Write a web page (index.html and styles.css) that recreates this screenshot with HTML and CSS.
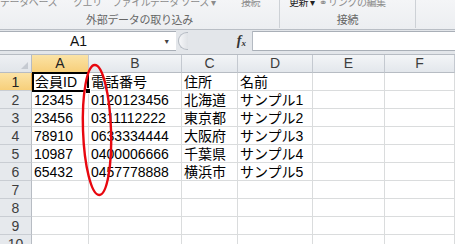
FILE: index.html
```html
<!DOCTYPE html>
<html lang="ja">
<head>
  <meta charset="UTF-8">
  <title>Excel - 外部データの取り込み</title>
  <link rel="stylesheet" href="styles.css">
</head>
<body>
  <div class="ribbon">
    <div class="group group-ext">
      <div class="cmds">
        <span class="cmd c1">データベース</span>
        <span class="cmd c2">クエリ</span>
        <span class="cmd c3">ファイル</span>
        <span class="cmd c4">データ ソース ▾</span>
        <span class="cmd c5">接続</span>
      </div>
      <div class="label">外部データの取り込み</div>
    </div>
    <div class="group group-conn">
      <div class="cmds">
        <span class="cmd on">更新 ▾</span>
        <span class="cmd c6">⚭ リンクの編集</span>
      </div>
      <div class="label">接続</div>
    </div>
    <div class="group group-rest"></div>
  </div>

  <div class="fbar">
    <div class="namebox">
      <span class="ref">A1</span>
      <span class="drop">&#9660;</span>
    </div>
    <div class="grip"></div>
    <div class="fx"><i>f</i><i class="x">x</i></div>
    <div class="input"></div>
  </div>

  <div class="sheet">
    <div class="grid">
      <div class="corner"><span></span></div>
      <div class="colhdr sel">A</div>
      <div class="colhdr">B</div>
      <div class="colhdr">C</div>
      <div class="colhdr">D</div>
      <div class="colhdr">E</div>
      <div class="colhdr">F</div>

      <div class="rowhdr sel">1</div>
      <div class="cell active">会員ID</div><div class="cell">電話番号</div><div class="cell">住所</div><div class="cell">名前</div><div class="cell"></div><div class="cell"></div>
      <div class="rowhdr">2</div>
      <div class="cell">12345</div><div class="cell">0120123456</div><div class="cell">北海道</div><div class="cell">サンプル1</div><div class="cell"></div><div class="cell"></div>
      <div class="rowhdr">3</div>
      <div class="cell">23456</div><div class="cell">0311112222</div><div class="cell">東京都</div><div class="cell">サンプル2</div><div class="cell"></div><div class="cell"></div>
      <div class="rowhdr">4</div>
      <div class="cell">78910</div><div class="cell">0633334444</div><div class="cell">大阪府</div><div class="cell">サンプル3</div><div class="cell"></div><div class="cell"></div>
      <div class="rowhdr">5</div>
      <div class="cell">10987</div><div class="cell">0400006666</div><div class="cell">千葉県</div><div class="cell">サンプル4</div><div class="cell"></div><div class="cell"></div>
      <div class="rowhdr">6</div>
      <div class="cell">65432</div><div class="cell">0457778888</div><div class="cell">横浜市</div><div class="cell">サンプル5</div><div class="cell"></div><div class="cell"></div>
      <div class="rowhdr">7</div>
      <div class="cell"></div><div class="cell"></div><div class="cell"></div><div class="cell"></div><div class="cell"></div><div class="cell"></div>
      <div class="rowhdr">8</div>
      <div class="cell"></div><div class="cell"></div><div class="cell"></div><div class="cell"></div><div class="cell"></div><div class="cell"></div>
      <div class="rowhdr">9</div>
      <div class="cell"></div><div class="cell"></div><div class="cell"></div><div class="cell"></div><div class="cell"></div><div class="cell"></div>
      <div class="rowhdr">10</div>
      <div class="cell"></div><div class="cell"></div><div class="cell"></div><div class="cell"></div><div class="cell"></div><div class="cell"></div>
    </div>

    <!-- red marker round the leading zeros -->
    <svg class="mark" width="40" height="140" viewBox="0 0 40 140">
      <ellipse cx="20" cy="68" rx="14" ry="65" fill="none" stroke="#e8070f" stroke-width="2.4" transform="rotate(-2 20 68)"/>
    </svg>
  </div>
</body>
</html>
```

FILE: styles.css
```css
*, *:before, *:after{
  padding: 0;
  margin: 0;
  box-sizing: border-box;
}
body{
  width: 455px;
  height: 244px;
  overflow: hidden;
  background: #fff;
  font-family: "Liberation Sans", "Noto Sans CJK JP", sans-serif;
}

/* ribbon */
.ribbon{
  height: 30px;
  display: flex;
  background: linear-gradient(#f4f5f7, #eceef1);
  border-bottom: 1px solid #b9bec5;
}
.group{
  display: flex;
  flex-direction: column;
  border-right: 1px solid #cdd1d6;
  height: 28px;
}
.group-ext{ width: 280px; }
.group-conn{ width: 136px; }
.group-rest{ flex: 1; border-right: none; }
.cmds{
  height: 9px;
  overflow: hidden;
  display: flex;
  align-items: flex-end;
  font-family: "Noto Sans CJK JP", sans-serif;
  font-size: 10px;
  line-height: 14px;
  color: #8c8c8c;
  white-space: nowrap;
  letter-spacing: -0.4px;
}
.cmd{ flex: none; }
.c1{ width: 66px; }
.c2{ margin-left: 7px; width: 33px; }
.c3{ margin-left: 6px; width: 38px; }
.c4{ margin-left: 0; width: 80px; }
.c5{ margin-left: 11px; }
.on{ color: #222; margin-left: 9px; }
.c6{ margin-left: 4px; }
.label{
  margin-top: 3px;
  text-align: center;
  font-family: "Noto Sans CJK JP", sans-serif;
  font-size: 11px;
  line-height: 14px;
  color: #666;
  letter-spacing: -0.3px;
}

/* formula bar */
.fbar{
  height: 23px;
  display: flex;
  align-items: flex-start;
  padding-top: 1px;
  background: #e3e6ea;
}
.namebox{
  width: 176px;
  height: 20px;
  background: #fff;
  border-top: 1px solid #a9afb7;
  border-bottom: 1px solid #a9afb7;
  display: flex;
  align-items: center;
  font-size: 14px;
  color: #111;
}
.ref{ margin-left: 70px; }
.drop{
  margin-left: 76px;
  font-size: 7px;
  color: #444;
}
.grip{
  width: 10px;
  height: 18px;
  margin: 1px 0 0 2px;
  border-radius: 9px 0 0 9px;
  border: 1px solid #b4bac2;
  border-right: none;
  background: linear-gradient(90deg, #f6f7f9, #dfe2e6);
}
.fx{
  width: 65px;
  height: 20px;
  display: flex;
  justify-content: flex-end;
  align-items: center;
  padding-right: 6px;
  font-family: "Liberation Serif", serif;
  font-weight: bold;
  font-size: 14px;
  color: #333;
  border-right: 1px solid #b4bac2;
}
.fx .x{ font-size: 9px; margin-top: 4px; }
.input{
  flex: 1;
  height: 20px;
  background: #fff;
  border-top: 1px solid #a9afb7;
  border-bottom: 1px solid #a9afb7;
}

/* sheet */
.sheet{
  position: relative;
  padding-top: 1px;
  background: #e3e6ea;
}
.grid{
  display: grid;
  grid-template-columns: 32px 57px 93px 56px 75px 72px 1fr;
  grid-auto-rows: 18px;
  background: #fff;
  border-top: 1px solid #b7bcc3;
}
.corner{
  background: linear-gradient(#eef0f3, #e1e5ea);
  border-right: 1px solid #b7bcc3;
  border-bottom: 1px solid #b7bcc3;
  display: flex;
  justify-content: flex-end;
  align-items: flex-end;
  padding: 0 3px 3px 0;
}
.corner span{
  width: 0;
  height: 0;
  border-left: 7px solid transparent;
  border-bottom: 7px solid #c5cad1;
}
.colhdr{
  background: linear-gradient(#f3f5f7, #e3e7ec);
  border-right: 1px solid #c4c9d0;
  border-bottom: 1px solid #b7bcc3;
  text-align: center;
  font-size: 14px;
  line-height: 17px;
  color: #3d3d3d;
}
.rowhdr{
  background: #e6e9ed;
  border-right: 1px solid #b7bcc3;
  border-bottom: 1px solid #c9cdd3;
  text-align: center;
  font-size: 14px;
  line-height: 18px;
  color: #3d3d3d;
}
.colhdr.sel, .rowhdr.sel{
  background: linear-gradient(#fbe3a6, #f7cf7a);
  color: #222;
}
.colhdr.sel{ border-bottom: 1px solid #e9a13c; }
.rowhdr.sel{ border-right: 1px solid #e9a13c; }
.cell{
  border-right: 1px solid #dadcdd;
  border-bottom: 1px solid #dadcdd;
  font-size: 14px;
  line-height: 18px;
  padding-left: 2px;
  color: #000;
  white-space: nowrap;
  overflow: hidden;
}
.cell.active{
  position: relative;
  overflow: visible;
  border: 2px solid #000;
  margin: -1px 0 -1px 0;
  padding-left: 1px;
  line-height: 17px;
  z-index: 2;
}
.cell.active::after{
  content: "";
  position: absolute;
  right: -4px;
  bottom: -4px;
  width: 6px;
  height: 6px;
  background: #000;
  border: 1px solid #fff;
}

.mark{
  position: absolute;
  left: 77px;
  top: 9px;
  z-index: 3;
}
```
